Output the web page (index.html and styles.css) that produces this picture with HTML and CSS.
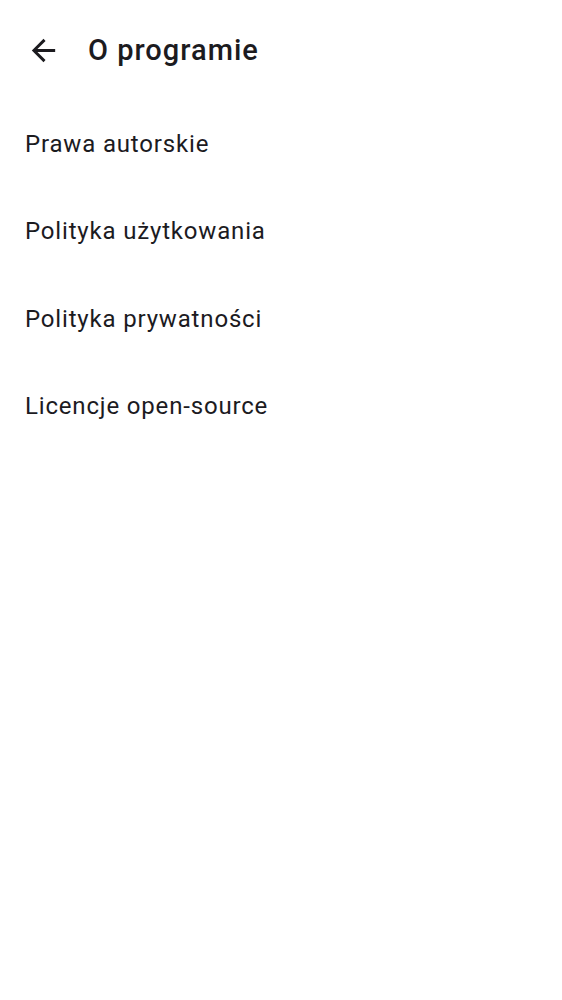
FILE: index.html
```html
<!DOCTYPE html>
<html lang="pl">
<head>
<meta charset="utf-8">
<title>O programie</title>
<link rel="stylesheet" href="styles.css">
</head>
<body>
<header class="appbar">
  <button class="back" aria-label="Wstecz">
    <svg viewBox="0 0 24 24" width="35" height="35"><path d="M20 11H7.83l5.59-5.59L12 4l-8 8 8 8 1.41-1.41L7.83 13H20v-2z" fill="currentColor"/></svg>
  </button>
  <h1 class="title">O programie</h1>
</header>
<ul class="list">
  <li class="item">Prawa autorskie</li>
  <li class="item">Polityka użytkowania</li>
  <li class="item">Polityka prywatności</li>
  <li class="item">Licencje open-source</li>
</ul>
</body>
</html>
```
FILE: styles.css
```css
html, body {
  margin: 0;
  padding: 0;
  background: #ffffff;
}
body {
  font-family: Roboto, "Noto Sans", sans-serif;
  color: #1c1b1f;
}
.appbar {
  height: 100px;
  display: flex;
  align-items: center;
  padding-left: 26px;
}
.back {
  width: 35px;
  height: 35px;
  padding: 0;
  margin: 0;
  border: 0;
  background: none;
  color: #1c1b1f;
  display: flex;
}
.title {
  margin: 0 0 0 27px;
  font-size: 29px;
  font-weight: 500;
  line-height: 34px;
  letter-spacing: 1px;
}
.list {
  list-style: none;
  margin: 0;
  padding: 0;
}
.item {
  height: 87.5px;
  display: flex;
  align-items: center;
  padding-left: 25px;
  font-size: 24px;
  line-height: 28px;
  letter-spacing: 0.83px;
}
```
